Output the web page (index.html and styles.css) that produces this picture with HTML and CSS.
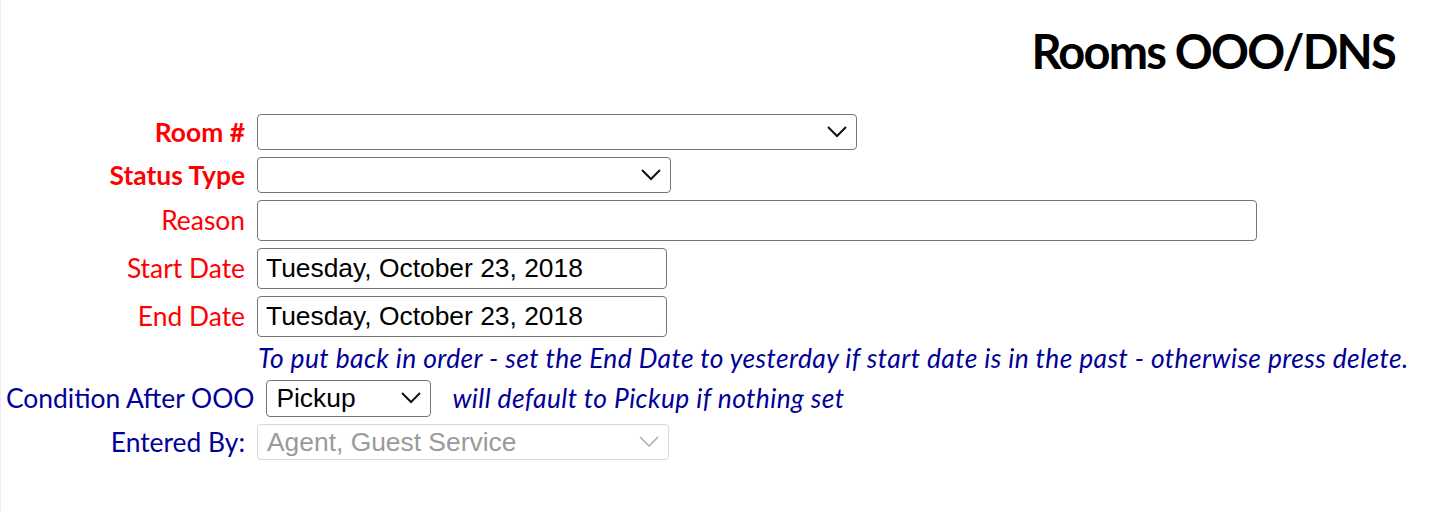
FILE: index.html
```html
<!DOCTYPE html>
<html lang="en">
<head>
  <meta charset="UTF-8" />
  <title>Rooms OOO/DNS</title>
  <link rel="stylesheet" href="styles.css">
</head>
<body>
  <div class="page">
    <h1>Rooms OOO/DNS</h1>

    <div class="form">
      <label class="req" for="room">Room #</label>
      <span class="select-wrap">
        <select id="room" class="sel-room"><option></option></select>
        <svg class="chev" width="20" height="12" viewBox="0 0 20 12"><polyline points="1,1 10,10 19,1" fill="none" stroke="currentColor" stroke-width="2"/></svg>
      </span>

      <label class="req" for="status">Status Type</label>
      <span class="select-wrap">
        <select id="status" class="sel-status"><option></option></select>
        <svg class="chev" width="20" height="12" viewBox="0 0 20 12"><polyline points="1,1 10,10 19,1" fill="none" stroke="currentColor" stroke-width="2"/></svg>
      </span>

      <label for="reason">Reason</label>
      <input type="text" id="reason" class="in-reason" />

      <label for="start">Start Date</label>
      <input type="text" id="start" class="in-date" value="Tuesday, October 23, 2018" />

      <label for="end">End Date</label>
      <input type="text" id="end" class="in-date" value="Tuesday, October 23, 2018" />

      <div class="note">To put back in order - set the End Date to yesterday if start date is in the past - otherwise press delete.</div>

      <div class="cond-row">
        <label class="blue" for="cond">Condition After OOO</label>
        <span class="select-wrap">
          <select id="cond" class="sel-cond">
            <option>Pickup</option>
            <option>Clean</option>
            <option>Dirty</option>
          </select>
          <svg class="chev" width="20" height="12" viewBox="0 0 20 12"><polyline points="1,1 10,10 19,1" fill="none" stroke="currentColor" stroke-width="2"/></svg>
        </span>
        <span class="hint">will default to Pickup if nothing set</span>
      </div>

      <label class="blue" for="agent">Entered By:</label>
      <span class="select-wrap off">
        <select id="agent" class="sel-agent" disabled><option>Agent, Guest Service</option></select>
        <svg class="chev" width="20" height="12" viewBox="0 0 20 12"><polyline points="1,1 10,10 19,1" fill="none" stroke="currentColor" stroke-width="1.5"/></svg>
      </span>
    </div>
  </div>
</body>
</html>
```

FILE: styles.css
```css
* {
  box-sizing: border-box;
}

body {
  margin: 0;
  background: #fff;
  font-family: Lato, 'Noto Sans', sans-serif;
  font-size: 26.4px;
}

.page {
  min-height: 512px;
  border-left: 1px solid #eee;
}

h1 {
  margin: 0;
  padding: 23px 42px 0 0;
  text-align: right;
  font-size: 47px;
  font-weight: bold;
  letter-spacing: -1.8px;
  line-height: 57.6px;
  color: #000;
}

.form {
  display: grid;
  grid-template-columns: 244px auto;
  column-gap: 12px;
  row-gap: 7px;
  align-items: center;
  justify-items: start;
  margin-top: 33px;
}

.form > label {
  justify-self: end;
  color: #f00;
}

.form > label.req {
  font-weight: bold;
}

.form > label.blue,
.cond-row label {
  color: #000099;
}

select, input {
  font-family: 'Liberation Sans', Arial, sans-serif;
  font-size: 26.4px;
  color: #000;
  border: 1px solid #767676;
  border-radius: 4px;
  background: #fff;
  margin: 0;
}

select {
  -webkit-appearance: none;
  appearance: none;
  height: 36px;
  padding: 0 36px 0 9px;
  display: block;
}

input {
  height: 41px;
  padding: 0 8px;
}

.select-wrap {
  position: relative;
  display: block;
  color: #111;
}

.chev {
  position: absolute;
  right: 10px;
  top: 50%;
  margin-top: -6px;
  pointer-events: none;
}

.select-wrap.off {
  color: #aaa;
}

.sel-room { width: 600px; }
.sel-status { width: 414px; }
.in-reason { width: 1000px; }
.in-date { width: 410px; }
.sel-cond { width: 165px; height: 37px; }
.sel-agent { width: 412px; }

select:disabled {
  color: #9a9a9a;
  border-color: #d8d8d8;
  background: #fff;
  opacity: 1;
}

.note {
  grid-column: 2;
  margin-left: 1px;
  font-style: italic;
  letter-spacing: 0.4px;
  color: #000099;
  line-height: 29px;
  white-space: nowrap;
}

.cond-row {
  grid-column: 1 / -1;
  display: flex;
  align-items: center;
  padding-left: 5px;
}

.cond-row .select-wrap {
  margin-left: 12px;
}

.hint {
  margin-left: 21px;
  font-style: italic;
  letter-spacing: 0.4px;
  color: #000099;
}
```
